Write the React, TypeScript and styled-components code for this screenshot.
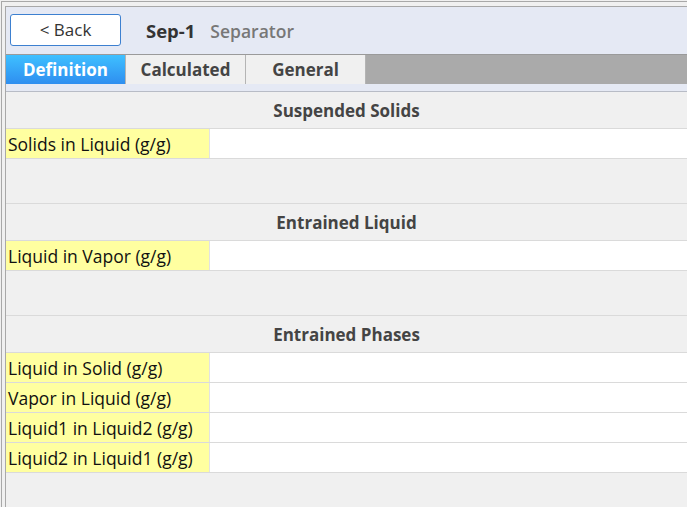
import React from "react";
import styled, { createGlobalStyle } from "styled-components";

const GlobalStyle = createGlobalStyle`
  html, body {
    margin: 0;
    padding: 0;
    background: #f0f0f0;
    height: 100%;
  }
  #root {
    height: 100%;
  }
  * {
    box-sizing: border-box;
  }
`;

type Section = {
  title: string;
  rows: string[];
};

const sections: Section[] = [
  { title: "Suspended Solids", rows: ["Solids in Liquid (g/g)"] },
  { title: "Entrained Liquid", rows: ["Liquid in Vapor (g/g)"] },
  {
    title: "Entrained Phases",
    rows: [
      "Liquid in Solid (g/g)",
      "Vapor in Liquid (g/g)",
      "Liquid1 in Liquid2 (g/g)",
      "Liquid2 in Liquid1 (g/g)",
    ],
  },
];

const tabs = ["Definition", "Calculated", "General"];

export default function App() {
  return (
    <>
      <GlobalStyle />
      <Window>
        <Frame>
          <Panel>
            <Header>
              <BackButton>&lt; Back</BackButton>
              <Title>Sep-1</Title>
              <SubTitle>Separator</SubTitle>
            </Header>
            <TabBar>
              {tabs.map((t, i) => (
                <Tab key={t} $active={i === 0}>
                  {t}
                </Tab>
              ))}
            </TabBar>
            <TabGap />
            <Content>
              {sections.map((s, i) => (
                <Group key={s.title} $first={i === 0}>
                  <GroupTitle>{s.title}</GroupTitle>
                  {s.rows.map((r) => (
                    <Row key={r}>
                      <Label>{r}</Label>
                      <Input />
                    </Row>
                  ))}
                </Group>
              ))}
            </Content>
          </Panel>
        </Frame>
      </Window>
    </>
  );
}

const Window = styled.div`
  height: 100%;
  padding: 1px 0 0 1px;
  font-family: "Open Sans", "Noto Sans", sans-serif;
`;

const Frame = styled.div`
  height: 100%;
  border-top: 1px solid #a8a8a8;
  border-left: 1px solid #a8a8a8;
  padding: 4px 0 0 3px;
  background: #f0f0f0;
`;

const Panel = styled.div`
  height: 100%;
  display: flex;
  flex-direction: column;
  border-top: 1px solid #a8a8a8;
  border-left: 1px solid #a8a8a8;
  background: #e5e9f4;
`;

const Header = styled.div`
  height: 47px;
  display: flex;
  align-items: center;
  padding: 0 0 0 4px;
`;

const BackButton = styled.button`
  width: 111px;
  height: 32px;
  margin-top: -1px;
  background: #ffffff;
  border: 1px solid #3d80d0;
  border-radius: 3px;
  font-family: "Open Sans", sans-serif;
  font-size: 17px;
  color: #333;
  padding: 0 0 1px 0;
`;

const Title = styled.span`
  margin-left: 25px;
  font-size: 18.5px;
  font-weight: 700;
  color: #333;
`;

const SubTitle = styled.span`
  margin-left: 15px;
  font-size: 17.5px;
  font-weight: 600;
  color: #777;
`;

const TabBar = styled.div`
  height: 30px;
  display: flex;
  background: #aaaaaa;
  border-top: 1px solid #9a9a9a;
`;

const Tab = styled.div<{ $active: boolean }>`
  width: 120px;
  display: flex;
  align-items: center;
  justify-content: center;
  font-size: 17px;
  font-weight: 700;
  color: ${(p) => (p.$active ? "#ffffff" : "#444444")};
  background: ${(p) =>
    p.$active ? "linear-gradient(#3fc0ff, #2e8ef0)" : "#f0f0f0"};
  border-right: 1px solid #b4b4b4;
`;

const TabGap = styled.div`
  height: 8px;
  border-bottom: 1px solid #b8bcc6;
`;

const Content = styled.div`
  flex: 1;
  background: #f0f0f0;
`;

const Group = styled.div<{ $first: boolean }>`
  margin-top: ${(p) => (p.$first ? "0" : "44px")};
  border-top: ${(p) => (p.$first ? "none" : "1px solid #dadada")};
`;

const GroupTitle = styled.div`
  height: 37px;
  display: flex;
  align-items: center;
  justify-content: center;
  font-size: 17px;
  font-weight: 700;
  color: #444;
  border-bottom: 1px solid #dadada;
  padding-top: 1px;
`;

const Row = styled.div`
  height: 30px;
  display: flex;
  border-bottom: 1px solid #dadada;
`;

const Label = styled.div`
  width: 204px;
  display: flex;
  align-items: center;
  padding-left: 2px;
  background: #ffffa0;
  font-size: 17.5px;
  color: #111;
  border-right: 1px solid #e2e2e2;
`;

const Input = styled.div`
  flex: 1;
  background: #ffffff;
`;
